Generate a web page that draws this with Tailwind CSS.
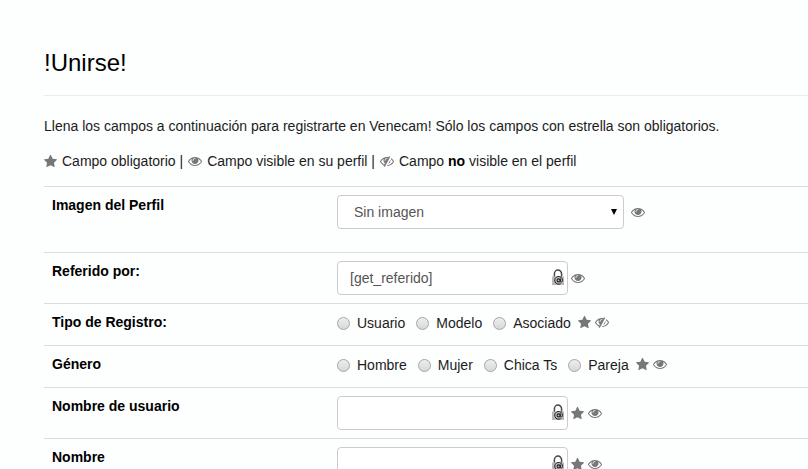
<!DOCTYPE html>
<html lang="es">
<head>
    <meta charset="UTF-8">
    <meta name="viewport" content="width=device-width, initial-scale=1.0">
    <title>Unirse - Venecam</title>
    <script src="https://cdn.jsdelivr.net/npm/@tailwindcss/browser@4"></script>
</head>
<body class="bg-[#fdfefe] font-['Liberation_Sans',Arial,sans-serif] text-sm leading-5 text-[#1c1c1c]">
    <!-- Icons -->
    <svg class="hidden" aria-hidden="true">
        <symbol id="star" viewBox="64 64 1664 1664"><path d="M1728 647q0 22-26 48l-363 354 86 500q1 7 1 20 0 21-10.5 35.5t-30.5 14.5q-19 0-40-12l-449-236-449 236q-22 12-40 12-21 0-31.5-14.5t-10.5-35.5q0-6 2-20l86-500-364-354q-25-27-25-48 0-37 56-46l502-73 225-455q19-41 49-41t49 41l225 455 502 73q56 9 56 46z"/></symbol>
        <symbol id="eye" viewBox="0 0 1792 1792"><path d="M1664 960q-152-236-381-353 61 104 61 225 0 185-131.5 316.5t-316.5 131.5-316.5-131.5-131.5-316.5q0-121 61-225-229 117-381 353 133 205 333.5 326.5t434.5 121.5 434.5-121.5 333.5-326.5zm-720-384q0-20-14-34t-34-14q-125 0-214.5 89.5t-89.5 214.5q0 20 14 34t34 14 34-14 14-34q0-86 61-147t147-61q20 0 34-14t14-34zm848 384q0 34-20 69-140 230-376.5 368.5t-499.5 138.5-499.5-139-376.5-368q-20-35-20-69t20-69q140-229 376.5-368t499.5-139 499.5 139 376.5 368q20 35 20 69z"/></symbol>
        <symbol id="eye-slash" viewBox="0 0 1792 1792"><path d="M555 1335l78-141q-87-63-136-159t-49-203q0-121 61-225-229 117-381 353 167 258 427 375zm389-759q0-20-14-34t-34-14q-125 0-214.5 89.5t-89.5 214.5q0 20 14 34t34 14 34-14 14-34q0-86 61-147t147-61q20 0 34-14t14-34zm363-191q0 7-1 9-106 189-316 567t-315 566l-49 89q-10 16-28 16-12 0-134-70-16-10-16-28 0-12 44-87-143-65-263.5-173t-208.5-245q-20-31-20-69t20-69q153-235 380-371t496-136q89 0 180 17l54-97q10-16 28-16 5 0 18 6t31 15.5 33 18.5 31.5 18.5 19.5 11.5q16 10 16 27zm37 447q0 139-79 253.5t-209 164.5l280-502q8 45 8 84zm448 128q0 35-20 69-39 64-109 145-150 172-347.5 267t-419.5 95l74-132q212-18 392.5-137t301.5-307q-115-179-282-294l63-112q95 64 182.5 153t144.5 184q20 34 20 69z"/></symbol>
        <symbol id="lock" viewBox="0 0 12 17">
            <path d="M2.4 8V5a3.6 3.9 0 0 1 7.2 0V8" fill="none" stroke="#484848" stroke-width="1.5"/>
            <path d="M0 7.5h12v8.5H0z" fill="#b9b9b9"/>
            <circle cx="6.6" cy="11.4" r="1.5" fill="none" stroke="#222" stroke-width="1.1"/>
            <path d="M8.4 9.6v2.8c0 1.2 2.1 1 2.1-1a3.9 3.9 0 1 0-1.8 3.2" fill="none" stroke="#222" stroke-width="1"/>
        </symbol>
    </svg>

    <main class="pl-11 pt-[47px]">
        <h1 class="border-b border-[#e9ebef] pb-4 text-2xl leading-8 text-black">!Unirse!</h1>

        <p class="mt-5">Llena los campos a continuación para registrarte en Venecam! Sólo los campos con estrella son obligatorios.</p>
        <p class="mt-[15px] flex items-center gap-[5px]">
            <svg class="size-[13px] fill-[#777]"><use href="#star"/></svg>
            <span>Campo obligatorio |</span>
            <svg class="size-[14px] fill-[#777]"><use href="#eye"/></svg>
            <span>Campo visible en su perfil |</span>
            <svg class="size-[14px] fill-[#777]"><use href="#eye-slash"/></svg>
            <span>Campo <b class="text-black">no</b> visible en el perfil</span>
        </p>

        <form class="mt-[15px]">
            <div class="flex border-t border-[#d9dce1] px-2 pt-2 pb-[23px]">
                <label for="imagen" class="w-[285px] shrink-0 font-bold text-black">Imagen del Perfil</label>
                <div class="flex items-center gap-[7px]">
                    <div class="relative">
                        <select id="imagen" class="h-[34px] w-[287px] appearance-none rounded border border-[#ccc] bg-white px-4 text-[#555]">
                            <option>Sin imagen</option>
                        </select>
                        <svg class="pointer-events-none absolute right-[7px] top-[14px] h-[6px] w-[6px]" viewBox="0 0 6 6"><path d="M0 0h6L3 6z"/></svg>
                    </div>
                    <svg class="size-[14px] fill-[#777]"><use href="#eye"/></svg>
                </div>
            </div>

            <div class="flex border-t border-[#d9dce1] p-2">
                <label for="referido" class="w-[285px] shrink-0 font-bold text-black">Referido por:</label>
                <div class="flex items-center gap-[3px]">
                    <div class="relative">
                        <input type="text" id="referido" value="[get_referido]" class="h-[34px] w-[231px] rounded border border-[#ccc] bg-white px-3 text-[#555]">
                        <svg class="pointer-events-none absolute right-1 top-2 h-[17px] w-3"><use href="#lock"/></svg>
                    </div>
                    <svg class="size-[14px] fill-[#777]"><use href="#eye"/></svg>
                </div>
            </div>

            <div class="flex border-t border-[#d9dce1] px-2 pt-2 pb-[11px]" role="radiogroup" aria-labelledby="tipo">
                <span id="tipo" class="w-[285px] shrink-0 font-bold text-black">Tipo de Registro:</span>
                <div class="flex h-[22px] items-center gap-[11px]">
                    <label class="flex items-center gap-[7px]"><input type="radio" name="tipo" class="size-[13px] appearance-none rounded-full border border-[#a5a5a5] bg-linear-to-b from-[#eee] to-[#d8d8d8] checked:border-4 checked:border-[#666]">Usuario</label>
                    <label class="flex items-center gap-[7px]"><input type="radio" name="tipo" class="size-[13px] appearance-none rounded-full border border-[#a5a5a5] bg-linear-to-b from-[#eee] to-[#d8d8d8] checked:border-4 checked:border-[#666]">Modelo</label>
                    <label class="flex items-center gap-[7px]"><input type="radio" name="tipo" class="size-[13px] appearance-none rounded-full border border-[#a5a5a5] bg-linear-to-b from-[#eee] to-[#d8d8d8] checked:border-4 checked:border-[#666]">Asociado</label>
                </div>
                <div class="ml-[7px] flex h-5 items-center gap-1">
                    <svg class="size-[13px] fill-[#777]"><use href="#star"/></svg>
                    <svg class="size-[14px] fill-[#777]"><use href="#eye-slash"/></svg>
                </div>
            </div>

            <div class="flex border-t border-[#d9dce1] px-2 pt-2 pb-[11px]" role="radiogroup" aria-labelledby="genero">
                <span id="genero" class="w-[285px] shrink-0 font-bold text-black">Género</span>
                <div class="flex h-[22px] items-center gap-[11px]">
                    <label class="flex items-center gap-[7px]"><input type="radio" name="genero" class="size-[13px] appearance-none rounded-full border border-[#a5a5a5] bg-linear-to-b from-[#eee] to-[#d8d8d8] checked:border-4 checked:border-[#666]">Hombre</label>
                    <label class="flex items-center gap-[7px]"><input type="radio" name="genero" class="size-[13px] appearance-none rounded-full border border-[#a5a5a5] bg-linear-to-b from-[#eee] to-[#d8d8d8] checked:border-4 checked:border-[#666]">Mujer</label>
                    <label class="flex items-center gap-[7px]"><input type="radio" name="genero" class="size-[13px] appearance-none rounded-full border border-[#a5a5a5] bg-linear-to-b from-[#eee] to-[#d8d8d8] checked:border-4 checked:border-[#666]">Chica Ts</label>
                    <label class="flex items-center gap-[7px]"><input type="radio" name="genero" class="size-[13px] appearance-none rounded-full border border-[#a5a5a5] bg-linear-to-b from-[#eee] to-[#d8d8d8] checked:border-4 checked:border-[#666]">Pareja</label>
                </div>
                <div class="ml-[7px] flex h-5 items-center gap-1">
                    <svg class="size-[13px] fill-[#777]"><use href="#star"/></svg>
                    <svg class="size-[14px] fill-[#777]"><use href="#eye"/></svg>
                </div>
            </div>

            <div class="flex border-t border-[#d9dce1] p-2">
                <label for="usuario" class="w-[285px] shrink-0 font-bold text-black">Nombre de usuario</label>
                <div class="flex items-center gap-[3px]">
                    <div class="relative">
                        <input type="text" id="usuario" class="h-[34px] w-[231px] rounded border border-[#ccc] bg-white px-3 text-[#555]">
                        <svg class="pointer-events-none absolute right-1 top-2 h-[17px] w-3"><use href="#lock"/></svg>
                    </div>
                    <div class="flex items-center gap-1">
                        <svg class="size-[13px] fill-[#777]"><use href="#star"/></svg>
                        <svg class="size-[14px] fill-[#777]"><use href="#eye"/></svg>
                    </div>
                </div>
            </div>

            <div class="flex border-t border-[#d9dce1] p-2">
                <label for="nombre" class="w-[285px] shrink-0 font-bold text-black">Nombre</label>
                <div class="flex items-center gap-[3px]">
                    <div class="relative">
                        <input type="text" id="nombre" class="h-[34px] w-[231px] rounded border border-[#ccc] bg-white px-3 text-[#555]">
                        <svg class="pointer-events-none absolute right-1 top-2 h-[17px] w-3"><use href="#lock"/></svg>
                    </div>
                    <div class="flex items-center gap-1">
                        <svg class="size-[13px] fill-[#777]"><use href="#star"/></svg>
                        <svg class="size-[14px] fill-[#777]"><use href="#eye"/></svg>
                    </div>
                </div>
            </div>
        </form>
    </main>
</body>
</html>
